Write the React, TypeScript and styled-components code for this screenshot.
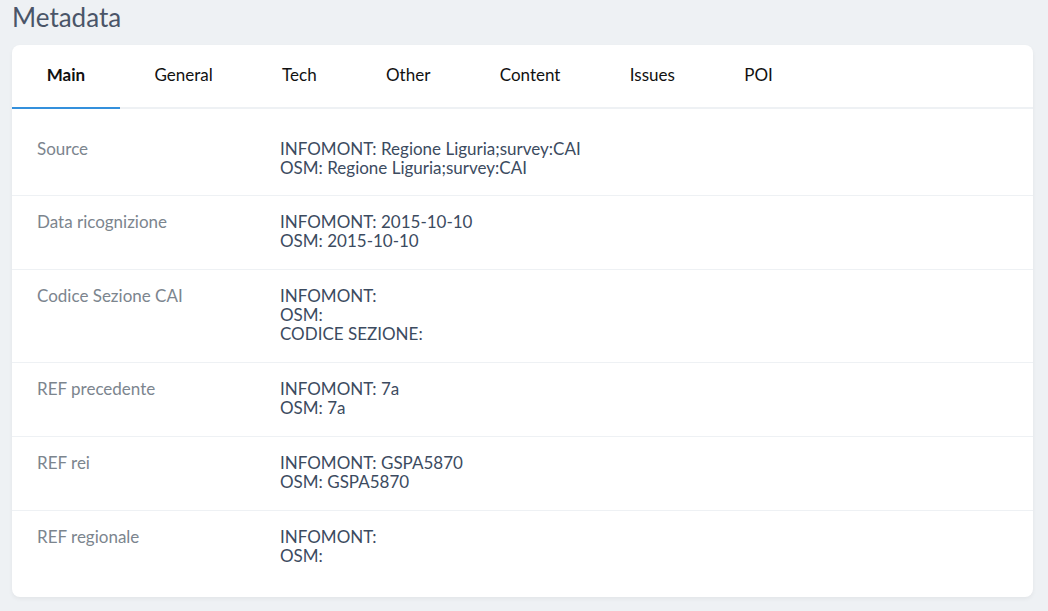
import React, { useState } from 'react';
import styled, { createGlobalStyle } from 'styled-components';

const GlobalStyle = createGlobalStyle`
  html, body {
    margin: 0;
    padding: 0;
    background: #eef1f4;
  }
  body {
    font-family: Lato, "Noto Sans", sans-serif;
  }
`;

const Page = styled.div`
  padding: 0 15px 14px 12px;
  box-sizing: border-box;
  width: 1048px;
`;

const Heading = styled.h1`
  margin: 0;
  height: 45px;
  font-size: 26px;
  line-height: 35px;
  font-weight: 400;
  color: #4a5568;
`;

const Card = styled.div`
  background: #fff;
  border-radius: 8px;
  box-shadow: 0 2px 4px rgba(0, 0, 0, 0.05);
  overflow: hidden;
`;

const TabBar = styled.div`
  display: flex;
  border-bottom: 2px solid #eef1f4;
`;

const Tab = styled.button<{ $active?: boolean }>`
  background: none;
  border: none;
  margin: 0 0 -2px;
  padding: 0 34.7px 3px;
  height: 64px;
  font-family: inherit;
  font-size: 17px;
  font-weight: ${p => (p.$active ? 700 : 400)};
  color: #111;
  cursor: pointer;
  border-bottom: 2px solid ${p => (p.$active ? '#3490dc' : 'transparent')};
`;

const Panel = styled.div`
  padding: 12px 0 13px;
`;

const Row = styled.div`
  display: flex;
  padding: 16px 0 19px;
  border-top: 1px solid #eef1f4;

  &:first-child {
    border-top: none;
    padding: 18px 0 18px;
  }
`;

const Label = styled.div`
  width: 243px;
  padding-left: 25px;
  font-size: 17px;
  line-height: 19px;
  color: #7c858e;
`;

const Value = styled.div`
  flex: 1;
  font-size: 17px;
  line-height: 19px;
  color: #3c4b5f;
`;

const tabs = ['Main', 'General', 'Tech', 'Other', 'Content', 'Issues', 'POI'];

const rows: { label: string; lines: string[] }[] = [
  { label: 'Source', lines: ['INFOMONT: Regione Liguria;survey:CAI', 'OSM: Regione Liguria;survey:CAI'] },
  { label: 'Data ricognizione', lines: ['INFOMONT: 2015-10-10', 'OSM: 2015-10-10'] },
  { label: 'Codice Sezione CAI', lines: ['INFOMONT:', 'OSM:', 'CODICE SEZIONE:'] },
  { label: 'REF precedente', lines: ['INFOMONT: 7a', 'OSM: 7a'] },
  { label: 'REF rei', lines: ['INFOMONT: GSPA5870', 'OSM: GSPA5870'] },
  { label: 'REF regionale', lines: ['INFOMONT:', 'OSM:'] },
];

const App: React.FC = () => {
  const [active, setActive] = useState('Main');
  return (
    <Page>
      <GlobalStyle />
      <Heading>Metadata</Heading>
      <Card>
        <TabBar>
          {tabs.map(t => (
            <Tab key={t} $active={t === active} onClick={() => setActive(t)}>
              {t}
            </Tab>
          ))}
        </TabBar>
        <Panel>
          {rows.map(r => (
            <Row key={r.label}>
              <Label>{r.label}</Label>
              <Value>
                {r.lines.map(l => (
                  <div key={l}>{l}</div>
                ))}
              </Value>
            </Row>
          ))}
        </Panel>
      </Card>
    </Page>
  );
};

export default App;
